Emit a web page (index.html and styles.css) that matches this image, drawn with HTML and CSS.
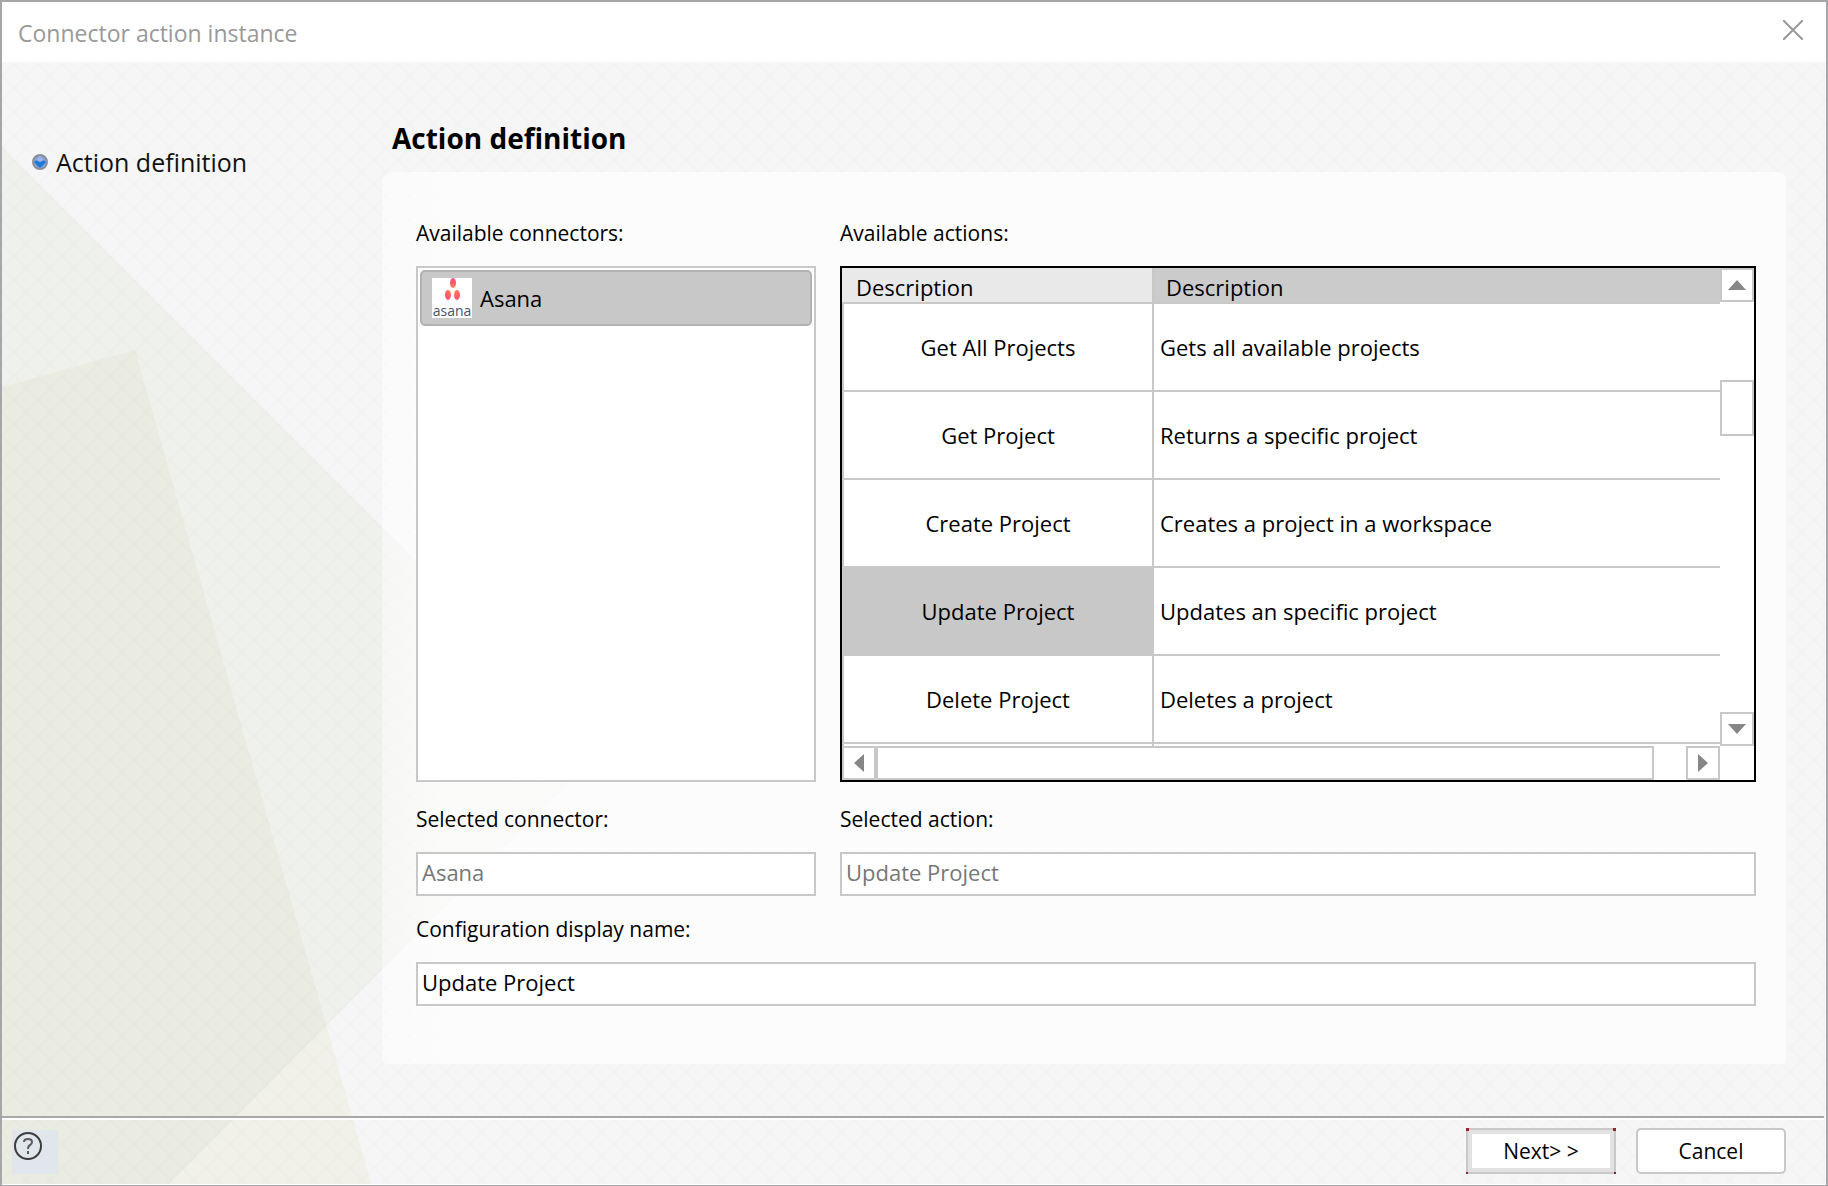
FILE: index.html
```html
<!DOCTYPE html>
<html lang="en">
<head>
<meta charset="utf-8">
<title>Connector action instance</title>
<link rel="stylesheet" href="styles.css">
</head>
<body>
<div class="dialog" role="dialog" aria-labelledby="dialog-title">
  <header class="titlebar">
    <h1 class="titlebar-text" id="dialog-title">Connector action instance</h1>
    <button class="close" type="button" aria-label="Close">
      <svg width="20" height="20" viewBox="0 0 20 20"><path d="M0 0L20 20M20 0L0 20" stroke="#999" stroke-width="2" fill="none"/></svg>
    </button>
  </header>

  <div class="content">
    <svg class="backdrop" aria-hidden="true">
      <defs>
        <pattern id="lattice" width="24" height="24" patternUnits="userSpaceOnUse" patternTransform="translate(12 2)">
          <g stroke="#000" stroke-opacity=".009" stroke-width="2" fill="none">
            <path d="M-1 -1L25 25"/>
            <path d="M25 -1L-1 25"/>
          </g>
        </pattern>
      </defs>
      <path d="M0 85L601 686L0 1290Z" fill="#7fa050" fill-opacity=".055"/>
      <path d="M0 325L133 288L369 1121L369 1200L0 1200Z" fill="#b0b030" fill-opacity=".06"/>
      <rect width="100%" height="100%" fill="url(#lattice)"/>
    </svg>

    <div class="body">
      <nav class="steps" aria-label="Steps">
        <ol class="step-list">
          <li class="step">
            <svg width="16" height="16" viewBox="0 0 16 16" aria-hidden="true">
              <circle cx="8" cy="8" r="7" fill="#7d9fdc" stroke="#8d9097" stroke-width="2"/>
              <path d="M2 8L5 6L8 8L11 6L14 8L8 14Z" fill="#1f78d6"/>
              <path d="M4 6L8 2L12 6L8 8Z" fill="#a3b4ea"/>
            </svg>
            <span>Action definition</span>
          </li>
        </ol>
      </nav>

      <main class="main">
        <h2 class="heading">Action definition</h2>
        <form class="panel" id="action-form">
          <section class="group pick">
            <span class="label" id="connectors-label">Available connectors:</span>
            <ul class="connector-list" role="listbox" aria-labelledby="connectors-label">
              <li class="connector" role="option" aria-selected="true">
                <svg class="connector-logo" width="40" height="40" viewBox="0 0 40 40" aria-hidden="true">
                  <defs>
                    <radialGradient id="asana" gradientUnits="userSpaceOnUse" cx="21" cy="12" r="13">
                      <stop offset="0" stop-color="#ff9a3c"/><stop offset=".6" stop-color="#fb5a6e"/><stop offset="1" stop-color="#f95380"/>
                    </radialGradient>
                  </defs>
                  <rect width="40" height="40" fill="#fff"/>
                  <g fill="url(#asana)"><ellipse cx="21" cy="5" rx="3" ry="5"/><ellipse cx="16" cy="17" rx="3" ry="5"/><ellipse cx="25" cy="17" rx="3" ry="5"/></g>
                  <text x="20" y="38" text-anchor="middle" class="logo-text">asana</text>
                </svg>
                <span>Asana</span>
              </li>
            </ul>
          </section>

          <section class="group pick">
            <span class="label" id="actions-label">Available actions:</span>
            <div class="grid-box">
              <div class="grid-view">
                <table class="actions" aria-labelledby="actions-label">
                  <thead>
                    <tr><th class="col-name" scope="col">Description</th><th class="active" scope="col">Description</th></tr>
                  </thead>
                  <tbody>
                    <tr><td>Get All Projects</td><td>Gets all available projects</td></tr>
                    <tr><td>Get Project</td><td>Returns a specific project</td></tr>
                    <tr><td>Create Project</td><td>Creates a project in a workspace</td></tr>
                    <tr><td class="selected">Update Project</td><td>Updates an specific project</td></tr>
                    <tr><td>Delete Project</td><td>Deletes a project</td></tr>
                    <tr class="cut"><td></td><td></td></tr>
                  </tbody>
                </table>
              </div>
              <div class="scroll-v">
                <button class="arrow" type="button" aria-label="Scroll up"><svg width="18" height="10" viewBox="0 0 18 10"><path d="M9 0L18 10H0Z"/></svg></button>
                <div class="track-v"><div class="thumb-v"></div></div>
                <button class="arrow" type="button" aria-label="Scroll down"><svg width="18" height="10" viewBox="0 0 18 10"><path d="M0 0H18L9 10Z"/></svg></button>
              </div>
              <div class="scroll-h">
                <button class="arrow" type="button" aria-label="Scroll left"><svg width="10" height="18" viewBox="0 0 10 18"><path d="M10 0V18L0 9Z"/></svg></button>
                <div class="track-h"><div class="thumb-h"></div></div>
                <button class="arrow" type="button" aria-label="Scroll right"><svg width="10" height="18" viewBox="0 0 10 18"><path d="M0 0L10 9L0 18Z"/></svg></button>
              </div>
            </div>
          </section>

          <div class="group">
            <label class="label" for="connector">Selected connector:</label>
            <input class="input" id="connector" type="text" value="Asana" disabled>
          </div>
          <div class="group">
            <label class="label" for="action">Selected action:</label>
            <input class="input" id="action" type="text" value="Update Project" disabled>
          </div>
          <div class="group wide">
            <label class="label" for="name">Configuration display name:</label>
            <input class="input" id="name" type="text" value="Update Project">
          </div>
        </form>
      </main>
    </div>

    <footer class="footer">
      <button class="help" type="button" aria-label="Help">
        <svg width="32" height="32" viewBox="0 0 32 32">
          <circle cx="16" cy="16" r="13" fill="none" stroke="#3c3c3c" stroke-width="2"/>
          <path d="M12 12Q12 9 16 9Q20 9 20 12Q20 14 18 15Q16 16 16 19M16 21V24" fill="none" stroke="#5a5a5a" stroke-width="2"/>
        </svg>
      </button>
      <button class="btn default" type="submit" form="action-form">Next&gt; &gt;</button>
      <button class="btn" type="button">Cancel</button>
    </footer>
  </div>
</div>
</body>
</html>
```
FILE: styles.css
```css
* {
  box-sizing: border-box;
}

body {
  margin: 0;
  font-family: "Open Sans", "Noto Sans", sans-serif;
  font-size: 22px;
  line-height: 30px;
  color: #000;
}

button,
input {
  font: inherit;
  color: inherit;
}

.dialog {
  display: flex;
  flex-direction: column;
  min-height: 100vh;
  border: 2px solid #a6a6a8;
  border-bottom-width: 1px;
  background: #fff;
}

.titlebar {
  display: flex;
  align-items: flex-start;
  justify-content: space-between;
  height: 60px;
  padding: 16px 23px 0 16px;
  background: #fff;
}

.titlebar-text {
  margin: 0;
  font-size: 23px;
  font-weight: 400;
  color: #999;
}

.close {
  display: flex;
  margin-top: 2px;
  padding: 0;
  border: 0;
  background: none;
}

.content {
  position: relative;
  display: flex;
  flex: 1;
  flex-direction: column;
  margin-bottom: 1px;
  background: #f6f6f6;
}

.backdrop {
  position: absolute;
  inset: 0;
  width: 100%;
  height: 100%;
}

.body {
  position: relative;
  display: grid;
  flex: 1;
  grid-template-columns: 380px 1fr;
  padding: 56px 40px 52px 0;
}

.steps {
  padding: 29px 0 0 30px;
}

.step-list {
  margin: 0;
  padding: 0;
  list-style: none;
}

.step {
  display: flex;
  align-items: center;
  gap: 8px;
  font-size: 25px;
  color: #111;
}

.heading {
  margin: 0 0 14px;
  padding-left: 10px;
  font-size: 28px;
  line-height: 40px;
}

.panel {
  display: grid;
  grid-template-columns: 400px 1fr;
  gap: 18px 24px;
  padding: 46px 30px 58px 34px;
  border-radius: 10px 8px 4px 6px;
  background: linear-gradient(90deg, rgba(255, 255, 255, .5), rgba(255, 255, 255, .72) 60px);
}

.group {
  display: flex;
  flex-direction: column;
  gap: 18px;
  min-width: 0;
}

.pick {
  padding-bottom: 4px;
}

.wide {
  grid-column: 1 / -1;
}

.label {
  font-size: 21px;
}

.connector-list {
  flex: 1;
  margin: 0;
  padding: 2px;
  border: 2px solid #c8c8c8;
  background: #fff;
  list-style: none;
}

.connector {
  display: flex;
  align-items: center;
  gap: 8px;
  height: 56px;
  padding: 0 10px;
  border: 2px solid #b2b2b2;
  border-radius: 5px;
  background: #c8c8c8;
}

.logo-text {
  font-size: 14px;
  fill: #46536a;
}

.grid-box {
  display: grid;
  grid-template-columns: 1fr 34px;
  grid-template-rows: 478px 34px;
  border: 2px solid #000;
  background: #fff;
}

.grid-view {
  overflow: hidden;
}

.actions {
  width: 100%;
  border-collapse: separate;
  border-spacing: 0;
  table-layout: fixed;
}

.actions th {
  height: 36px;
  padding: 4px 12px 0;
  border-bottom: 2px solid #c8c8c8;
  background: #e9e9e9;
  font-weight: 400;
  text-align: left;
}

.actions .col-name {
  width: 312px;
  padding-left: 14px;
  border-right: 2px solid #c8c8c8;
}

.actions .active {
  background: #cbcbcb;
}

.actions td {
  height: 88px;
  padding: 0 6px;
  border-bottom: 2px solid #c8c8c8;
}

.actions td:first-child {
  border-right: 2px solid #c8c8c8;
  border-left: 2px solid #c8c8c8;
  text-align: center;
}

.actions .selected {
  background: #c8c8c8;
}

.actions .cut td {
  height: 2px;
  border-bottom: 0;
}

.scroll-v {
  display: flex;
  flex-direction: column;
}

.scroll-h {
  display: flex;
}

.arrow {
  display: flex;
  flex: none;
  align-items: center;
  justify-content: center;
  width: 34px;
  height: 34px;
  padding: 0;
  border: 2px solid #c8c8c8;
  background: #fff;
  fill: #868686;
}

.track-v {
  flex: 1;
  padding-top: 78px;
}

.thumb-v {
  height: 56px;
  border: 2px solid #c8c8c8;
}

.track-h {
  flex: 1;
  padding-right: 32px;
}

.thumb-h {
  height: 34px;
  border: 2px solid #c8c8c8;
}

.input {
  width: 100%;
  height: 44px;
  padding: 0 4px 5px;
  border: 2px solid #c8c8c8;
  background: #fff;
}

.input:disabled {
  color: #777;
}

.footer {
  position: relative;
  display: flex;
  align-items: center;
  gap: 20px;
  margin-right: 2px;
  padding: 10px 38px 10px 10px;
  border-top: 2px solid #a8a8a8;
  box-shadow: inset 0 2px #fff;
}

.help {
  display: flex;
  width: 46px;
  height: 44px;
  margin: 2px auto 0 0;
  padding: 0;
  border: 0;
  background: #e1e5ec;
}

.btn {
  width: 150px;
  height: 46px;
  padding: 0;
  border: 2px solid #c8c8c8;
  border-radius: 5px;
  background: #fff;
  font-size: 21px;
}

.default {
  position: relative;
  border-radius: 0;
  box-shadow: inset 0 0 0 4px #e2e2e2;
}

/* Dark red marks on the corners of the default button */
.default::after {
  content: "";
  position: absolute;
  inset: -2px;
  background:
    linear-gradient(#8c2a2a, #8c2a2a) 0 0 / 3px 3px,
    linear-gradient(#8c2a2a, #8c2a2a) 100% 0 / 3px 3px,
    linear-gradient(#8c2a2a, #8c2a2a) 0 100% / 2px 2px,
    linear-gradient(#8c2a2a, #8c2a2a) 100% 100% / 2px 2px;
  background-repeat: no-repeat;
}
```
